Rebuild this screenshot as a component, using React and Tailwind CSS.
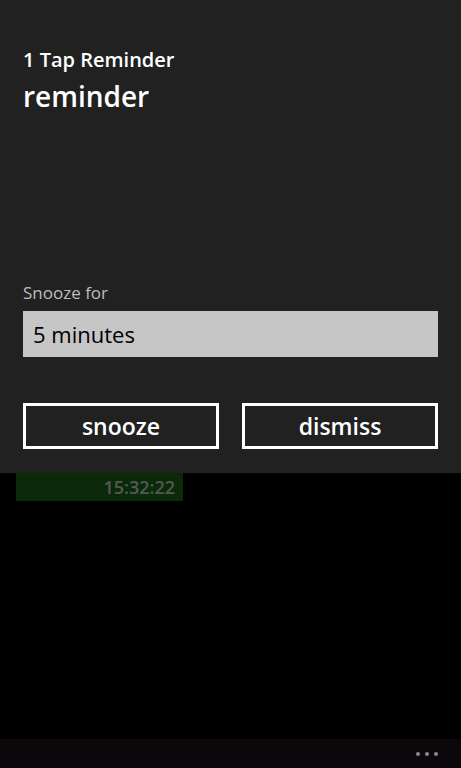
import React from "react";

const font = { fontFamily: '"Open Sans", "Noto Sans", sans-serif' };

const ReminderScreen = () => {
  return (
    <div className="flex h-[768px] w-[461px] flex-col bg-black" style={font}>
      {/* Reminder dialog */}
      <div className="flex h-[473px] flex-col bg-[#212121] px-[23px]">
        <div className="mt-[46px] text-[20px] font-semibold leading-[28px] text-white">
          1 Tap Reminder
        </div>
        <div className="mt-[5px] text-[28px] font-semibold leading-[34px] text-white">
          reminder
        </div>

        <div className="mt-[168px] text-[17px] leading-[24px] text-[#bdbdbd]">Snooze for</div>
        <div className="mt-[6px] flex h-[46px] items-center bg-[#c6c6c6] px-[10px] text-[22px] text-black">
          5 minutes
        </div>

        <div className="mt-[46px] grid grid-cols-2 gap-[23px]">
          <button className="flex h-[46px] items-center justify-center border-[3px] border-white text-[23px] font-semibold text-white">
            snooze
          </button>
          <button className="flex h-[46px] items-center justify-center border-[3px] border-white text-[23px] font-semibold text-white">
            dismiss
          </button>
        </div>
      </div>

      {/* Clock strip behind the dialog */}
      <div className="ml-[16px] flex h-[28px] w-[167px] items-center justify-end bg-[#0a2a0a] pr-[8px] text-[18px] font-semibold text-[#575757]">
        15:32:22
      </div>

      <div className="flex-1" />

      {/* App bar */}
      <div className="flex h-[29px] items-center justify-end gap-[5px] bg-[#0b070b] pr-[23px]">
        <span className="h-[4px] w-[4px] rounded-full bg-[#8a8a8a]" />
        <span className="h-[4px] w-[4px] rounded-full bg-[#8a8a8a]" />
        <span className="h-[4px] w-[4px] rounded-full bg-[#8a8a8a]" />
      </div>
    </div>
  );
};

export default function App() {
  return <ReminderScreen />;
}
